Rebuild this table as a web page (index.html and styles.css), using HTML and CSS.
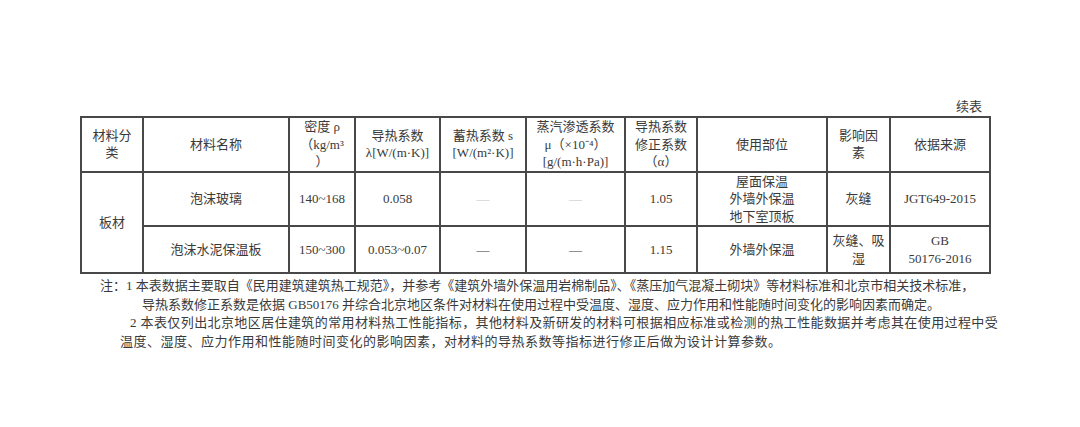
FILE: index.html
```html
<!DOCTYPE html>
<html lang="zh-CN">
<head>
<meta charset="utf-8">
<title>续表</title>
<link rel="stylesheet" href="styles.css">
</head>
<body>
<div class="page">
  <div class="caption">续表</div>
  <table class="data">
    <colgroup>
      <col style="width:62px"><col style="width:146px"><col style="width:66px"><col style="width:85px"><col style="width:86px"><col style="width:99px"><col style="width:72px"><col style="width:130px"><col style="width:63px"><col style="width:100px">
    </colgroup>
    <tr class="head">
      <td>材料分<br>类</td>
      <td>材料名称</td>
      <td>密度 ρ<br>（kg/m³<br>）</td>
      <td>导热系数<br>λ[W/(m·K)]</td>
      <td>蓄热系数 s<br>[W/(m²·K)]</td>
      <td>蒸汽渗透系数<br>μ（×10⁻⁴）<br>[g/(m·h·Pa)]</td>
      <td>导热系数<br>修正系数<br>（α）</td>
      <td>使用部位</td>
      <td>影响因<br>素</td>
      <td>依据来源</td>
    </tr>
    <tr class="r1">
      <td rowspan="2">板材</td>
      <td>泡沫玻璃</td>
      <td>140~168</td>
      <td>0.058</td>
      <td class="faint">—</td>
      <td class="faint">—</td>
      <td>1.05</td>
      <td>屋面保温<br>外墙外保温<br>地下室顶板</td>
      <td>灰缝</td>
      <td>JGT649-2015</td>
    </tr>
    <tr class="r2">
      <td>泡沫水泥保温板</td>
      <td>150~300</td>
      <td>0.053~0.07</td>
      <td>—</td>
      <td>—</td>
      <td>1.15</td>
      <td>外墙外保温</td>
      <td>灰缝、吸<br>湿</td>
      <td>GB<br>50176-2016</td>
    </tr>
  </table>
  <div class="notes">
    <div class="line l1">注：1 本表数据主要取自《民用建筑建筑热工规范》，并参考《建筑外墙外保温用岩棉制品》、《蒸压加气混凝土砌块》等材料标准和北京市相关技术标准，</div>
    <div class="line l2">导热系数修正系数是依据 GB50176 并综合北京地区条件对材料在使用过程中受温度、湿度、应力作用和性能随时间变化的影响因素而确定。</div>
    <div class="line l3">2 本表仅列出北京地区居住建筑的常用材料热工性能指标，其他材料及新研发的材料可根据相应标准或检测的热工性能数据并考虑其在使用过程中受</div>
    <div class="line l4">温度、湿度、应力作用和性能随时间变化的影响因素，对材料的导热系数等指标进行修正后做为设计计算参数。</div>
  </div>
</div>
</body>
</html>
```

FILE: styles.css
```css
html, body {
  margin: 0;
  padding: 0;
  background: #ffffff;
}
body {
  font-family: "Liberation Serif", "Noto Sans CJK SC", serif;
  color: #3a3a3a;
  font-size: 13px;
}
.page {
  width: 909px;
  padding: 98px 0 0 80px;
}
.caption {
  height: 18px;
  line-height: 18px;
  text-align: right;
  padding-right: 7px;
  font-size: 13px;
}
.data {
  width: 909px;
  table-layout: fixed;
  border-collapse: collapse;
}
.data td {
  border: 2px solid #484848;
  text-align: center;
  vertical-align: middle;
  padding: 0;
  line-height: 17.5px;
  font-size: 13px;
  white-space: nowrap;
  overflow: hidden;
}
.head td { height: 51px; }
.r1 td { height: 50px; }
.r2 td { height: 45px; }
.faint { color: #c4c4c4; }
.notes {
  margin-top: 3px;
}
.line {
  height: 18.7px;
  line-height: 18.7px;
  white-space: nowrap;
  font-size: 13px;
}
.l1 { padding-left: 20px; }
.l2 { padding-left: 62px; }
.l3 { padding-left: 50px; letter-spacing: 0.4px; }
.l4 { padding-left: 40px; letter-spacing: 0.5px; }
```
